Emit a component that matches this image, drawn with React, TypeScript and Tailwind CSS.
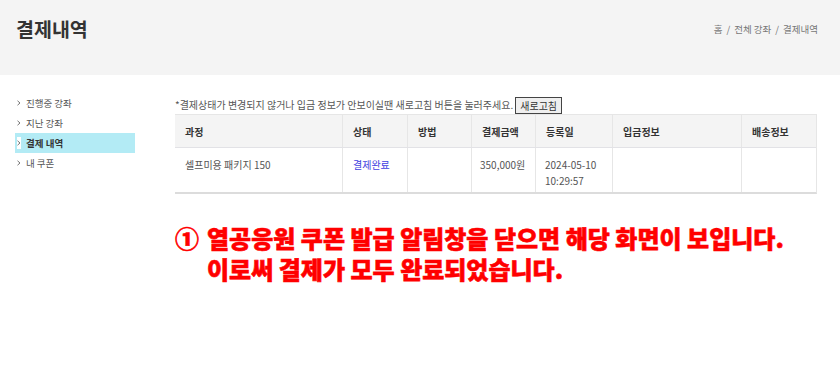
import React from "react";

const font = { fontFamily: '"Noto Sans CJK KR", "Noto Sans", sans-serif' };

function Bullet() {
  return (
    <svg width="4" height="6" viewBox="0 0 4 6" className="shrink-0">
      <path d="M0.5 0.8 L3 3 L0.5 5.2" fill="none" stroke="#777" strokeWidth="1" />
    </svg>
  );
}

export default function App() {
  const menu = ["진행중 강좌", "지난 강좌", "결제 내역", "내 쿠폰"];
  const cols = [
    { t: "과정", w: "w-[167px]" },
    { t: "상태", w: "w-[65px]" },
    { t: "방법", w: "w-[64px]" },
    { t: "결제금액", w: "w-[64px]" },
    { t: "등록일", w: "w-[77px]" },
    { t: "입금정보", w: "w-[129px]" },
    { t: "배송정보", w: "flex-1" },
  ];
  return (
    <div className="w-[840px] h-[370px] bg-white overflow-hidden" style={font}>
      <div className="h-[75px] bg-[#f4f4f4] flex items-start justify-between pl-[16px] pr-[22px]">
        <h1 className="mt-[14px] text-[19.5px] leading-[30px] font-bold text-[#333]">결제내역</h1>
        <div className="mt-[22px] text-[9.5px] leading-[14px] text-[#777] flex">
          <span>홈</span>
          <span className="mx-[4px]">/</span>
          <span>전체 강좌</span>
          <span className="mx-[4px]">/</span>
          <span>결제내역</span>
        </div>
      </div>
      <div className="flex pl-[15px]">
        <ul className="w-[120px] mt-[18px]">
          {menu.map((m, i) => {
            const active = i === 2;
            return (
              <li
                key={m}
                className={`h-[20px] flex items-center gap-[5px] pl-[2px] text-[9.5px] ${
                  active ? "bg-[#b3ebf5] font-bold text-[#333]" : "text-[#555]"
                }`}
              >
                <span className={`flex items-center h-[12px] w-[4px] ${active ? "bg-white" : ""}`}>
                  <Bullet />
                </span>
                <span>{m}</span>
              </li>
            );
          })}
        </ul>
        <div className="ml-[40px] w-[642px]">
          <div className="mt-[22px] flex items-end gap-[2px]">
            <span className="text-[10px] leading-[14px] text-[#555] mb-[2px] whitespace-nowrap">
              *결제상태가 변경되지 않거나 입금 정보가 안보이실땐 새로고침 버튼을 눌러주세요.
            </span>
            <button className="h-[17px] w-[47px] border border-[#444] bg-[#efefef] text-[10px] leading-[14px] text-[#333]">
              새로고침
            </button>
          </div>
          <div className="border-t border-r border-[#e6e6e6] border-b-2 border-b-[#dcdcdc]">
            <div className="flex h-[33px] bg-[#f4f4f4] border-b border-[#e2e2e6]">
              {cols.map((c, i) => (
                <div
                  key={c.t}
                  className={`${c.w} ${i > 0 ? "border-l border-[#e6e6e6]" : ""} flex items-center px-[10px] text-[10px] font-bold text-[#333] whitespace-nowrap`}
                >
                  {c.t}
                </div>
              ))}
            </div>
            <div className="flex h-[44px] text-[10px] leading-[16px] text-[#555] whitespace-nowrap">
              <div className="w-[167px] px-[10px] pt-[9px]">셀프미용 패키지 150</div>
              <div className="w-[65px] border-l border-[#e6e6e6] px-[10px] pt-[9px] text-[#4040e0]">결제완료</div>
              <div className="w-[64px] border-l border-[#e6e6e6]"></div>
              <div className="w-[64px] border-l border-[#e6e6e6] pl-[8px] pt-[9px]">350,000원</div>
              <div className="w-[77px] border-l border-[#e6e6e6] px-[9px] pt-[9px]">
                2024-05-10
                <br />
                10:29:57
              </div>
              <div className="w-[129px] border-l border-[#e6e6e6]"></div>
              <div className="flex-1 border-l border-[#e6e6e6]"></div>
            </div>
          </div>
          <div className="mt-[28px] flex text-[24px] leading-[31px] font-black text-[#ff0000] [-webkit-text-stroke:0.6px_#ff0000] whitespace-nowrap">
            <span className="w-[32px] shrink-0">①</span>
            <div>
              열공응원 쿠폰 발급 알림창을 닫으면 해당 화면이 보입니다.
              <br />
              이로써 결제가 모두 완료되었습니다.
            </div>
          </div>
        </div>
      </div>
    </div>
  );
}
